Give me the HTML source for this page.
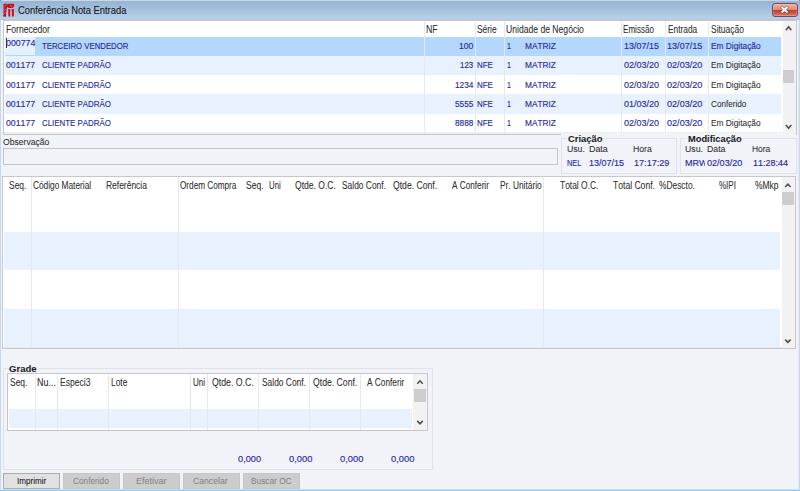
<!DOCTYPE html>
<html><head><meta charset="utf-8"><title>Conferência Nota Entrada</title>
<style>
html,body{margin:0;padding:0;}
body{width:800px;height:491px;overflow:hidden;position:relative;background:#f1f3f9;font-family:"Liberation Sans",sans-serif;font-size:9.7px;color:#2c2c2c;font-kerning:none;}
.a{position:absolute;}
.t{position:absolute;white-space:nowrap;line-height:12px;height:12px;transform-origin:0 0;-webkit-text-stroke:0.06px currentColor;}
.b{color:#2a2aa2;-webkit-text-stroke:0.15px currentColor;}
#title{left:0;top:0;width:800px;height:18px;background:linear-gradient(#96b3d1 0,#a8c2df 55%,#b7d2ec 100%);border-top:1px solid #c9d8e8;border-bottom:1px solid #bcc5cf;}
.grid{background:#fff;border:1px solid #c4c8cd;box-sizing:border-box;overflow:hidden;}
.row{position:absolute;left:1px;}
.alt{background:#e7f2fe;}
.vl{position:absolute;top:0;bottom:0;width:1px;background:#e6e8ea;}
.sb{position:absolute;background:#f2f2f2;top:0;bottom:0;}
.th{position:absolute;background:#cdcdcd;}
.btn{position:absolute;top:473px;height:16px;width:56.5px;box-sizing:border-box;border:1px solid #c6c6c6;background:#cccccc;}
.gb{position:absolute;border:1px solid #dfe2e7;box-sizing:border-box;}
.gl{position:absolute;background:#f1f3f9;height:3px;}
</style></head><body>
<!-- window frame -->
<div class="a" id="title"></div>
<div class="a" style="left:0;top:20px;width:1px;height:471px;background:#c5d9ee"></div>
<div class="a" style="left:799px;top:20px;width:1px;height:471px;background:#c5d9ee"></div>
<div class="a" style="left:798px;top:20px;width:1px;height:471px;background:#e2ebf6"></div>
<div class="a" style="left:0;top:489px;width:800px;height:1px;background:#c4e4f1"></div>
<div class="a" style="left:0;top:490px;width:800px;height:1px;background:#88cfe6"></div>
<div class="a" style="left:0;top:0;width:1px;height:1px;background:#7d858e"></div>
<div class="a" style="left:799px;top:0;width:1px;height:1px;background:#6f9096"></div>
<!-- icon -->
<svg class="a" style="left:2px;top:2px" width="14" height="16" viewBox="2 2 14 16"><path d="M3.4 4.3 Q3.4 3.7 4 3.7 L6.9 3.7 L7.4 4.6 L8 3.7 L13.5 3.7 Q14.1 3.7 14.1 4.3 L14.1 6.6 Q13.4 7.9 11.6 7.9 L9 7.9 Q7.6 7.6 7.1 6.7 Q6.9 8 6.6 9.4 Q6.1 12.6 6 16.5 L3.4 16.5 Q3.2 12 3.6 8.4 Z" fill="#c8121a"/><path d="M8 9.7 L9 9 L10.2 9 L10.2 16.5 L8.3 16.5 L8.3 10.5 L8 10.5 Z M11.4 9.7 L12.4 9 L13.9 9 L13.9 16.5 L11.9 16.5 L11.9 10.5 L11.4 10.5 Z" fill="#d01018"/><path d="M4.3 6.5 L6.6 4.6 M9.9 4.9 L12 6.8 M3.9 10.9 L6 8.9 M3.8 14.2 L5.8 11.9" stroke="#e9a0a6" stroke-width="0.55" fill="none"/><path d="M3.4 16.5 L6 16.5 L6.05 14 L3.4 15 Z" fill="#a80c12" opacity=".6"/></svg>
<!-- close button -->
<div class="a" style="left:772px;top:3px;width:26px;height:14px;border:1px solid #734860;border-radius:3px;box-sizing:border-box;background:linear-gradient(#eeb4a8 0,#e08a78 46%,#c0402a 54%,#c94e36 70%,#dc8068 100%);box-shadow:inset 0 0 0 0.5px rgba(255,220,210,.5)"></div>
<svg class="a" style="left:776px;top:3px" width="18" height="14" viewBox="776 3 18 14"><path d="M781 6.6 L788 12.9 M788 6.6 L781 12.9" stroke="rgba(95,55,65,0.6)" stroke-width="3.2"/><path d="M781.5 7.05 L787.5 12.45 M787.5 7.05 L781.5 12.45" stroke="#fff" stroke-width="1.9"/></svg>

<div class="t " style="left:18.25px;top:5.00px;transform:scaleX(0.9019);font-size:10.4px;color:#16161e;-webkit-text-stroke:0.1px #16161e;">Conferência Nota Entrada</div>
<!-- GRID 1 -->
<div class="a grid" style="left:3px;top:20px;width:794px;height:115px;">
 <div class="row" style="top:15.8px;height:19.2px;width:776px;background:#b4d8fd"></div>
 <div class="row alt" style="top:35.0px;height:19.2px;width:776px;"></div>
 <div class="row alt" style="top:73.4px;height:19.2px;width:776px;"></div>
 <div class="a" style="left:1px;top:15.8px;width:30px;height:18.5px;background:#e4f0fd"></div>
 <div class="vl" style="left:420px"></div>
 <div class="vl" style="left:471px"></div>
 <div class="vl" style="left:500px"></div>
 <div class="vl" style="left:617px"></div>
 <div class="vl" style="left:661px"></div>
 <div class="vl" style="left:704px"></div>
 <div class="a" style="left:0;top:111.4px;width:800px;height:3px;background:#eeeeee"></div>
 <div class="sb" style="left:778.5px;width:14px;"></div>
 <div class="th" style="left:778.7px;top:49.1px;width:11.8px;height:13.4px;"></div>
</div>
<svg class="a" style="left:0;top:0" width="800" height="491" viewBox="0 0 800 491"><path d="M785.9 30.2 L788.6 26.8 L791.3000000000001 30.2" fill="none" stroke="#4c4c4c" stroke-width="1.55"/></svg>
<svg class="a" style="left:0;top:0" width="800" height="491" viewBox="0 0 800 491"><path d="M785.9 125.1 L788.6 128.2 L791.3000000000001 125.1" fill="none" stroke="#4c4c4c" stroke-width="1.55"/></svg>
<div class="t " style="left:5.75px;top:23.64px;transform:scaleX(0.8584);font-size:10.0px;">Fornecedor</div>
<div class="t " style="left:426.00px;top:23.64px;transform:scaleX(0.8741);font-size:10.0px;">NF</div>
<div class="t " style="left:477.00px;top:23.64px;transform:scaleX(0.8418);font-size:10.0px;">Série</div>
<div class="t " style="left:506.25px;top:23.64px;transform:scaleX(0.8596);font-size:10.0px;">Unidade de Negócio</div>
<div class="t " style="left:623.25px;top:23.64px;transform:scaleX(0.8059);font-size:10.0px;">Emissão</div>
<div class="t " style="left:667.50px;top:23.64px;transform:scaleX(0.8321);font-size:10.0px;">Entrada</div>
<div class="t " style="left:710.75px;top:23.64px;transform:scaleX(0.8453);font-size:10.0px;">Situação</div>
<div class="t b" style="left:5.50px;top:36.94px;transform:scaleX(0.9090);">000774</div>
<div class="t b" style="left:41.50px;top:40.14px;transform:scaleX(0.8022);">TERCEIRO VENDEDOR</div>
<div class="t b" style="left:459.00px;top:40.14px;transform:scaleX(0.8904);">100</div>
<div class="t b" style="left:507.00px;top:40.14px;transform:scaleX(0.7235);">1</div>
<div class="t b" style="left:524.50px;top:40.14px;transform:scaleX(0.8571);">MATRIZ</div>
<div class="t b" style="left:623.75px;top:40.14px;transform:scaleX(0.9253);">13/07/15</div>
<div class="t b" style="left:667.25px;top:40.14px;transform:scaleX(0.9385);">13/07/15</div>
<div class="t b" style="left:710.75px;top:40.14px;transform:scaleX(0.8616);">Em Digitação</div>
<div class="t b" style="left:5.50px;top:59.34px;transform:scaleX(0.9016);">001177</div>
<div class="t b" style="left:41.50px;top:59.34px;transform:scaleX(0.8149);">CLIENTE PADRÃO</div>
<div class="t b" style="left:460.25px;top:59.34px;transform:scaleX(0.8131);">123</div>
<div class="t b" style="left:476.50px;top:59.34px;transform:scaleX(0.8200);">NFE</div>
<div class="t b" style="left:507.00px;top:59.34px;transform:scaleX(0.7235);">1</div>
<div class="t b" style="left:524.50px;top:59.34px;transform:scaleX(0.8571);">MATRIZ</div>
<div class="t b" style="left:623.75px;top:59.34px;transform:scaleX(0.9253);">02/03/20</div>
<div class="t b" style="left:667.25px;top:59.34px;transform:scaleX(0.9385);">02/03/20</div>
<div class="t " style="left:710.75px;top:59.34px;transform:scaleX(0.8616);">Em Digitação</div>
<div class="t b" style="left:5.50px;top:78.54px;transform:scaleX(0.9016);">001177</div>
<div class="t b" style="left:41.50px;top:78.54px;transform:scaleX(0.8149);">CLIENTE PADRÃO</div>
<div class="t b" style="left:455.00px;top:78.54px;transform:scaleX(0.8533);">1234</div>
<div class="t b" style="left:476.50px;top:78.54px;transform:scaleX(0.8200);">NFE</div>
<div class="t b" style="left:507.00px;top:78.54px;transform:scaleX(0.7235);">1</div>
<div class="t b" style="left:524.50px;top:78.54px;transform:scaleX(0.8571);">MATRIZ</div>
<div class="t b" style="left:623.75px;top:78.54px;transform:scaleX(0.9253);">02/03/20</div>
<div class="t b" style="left:667.25px;top:78.54px;transform:scaleX(0.9385);">02/03/20</div>
<div class="t " style="left:710.75px;top:78.54px;transform:scaleX(0.8616);">Em Digitação</div>
<div class="t b" style="left:5.50px;top:97.74px;transform:scaleX(0.9016);">001177</div>
<div class="t b" style="left:41.50px;top:97.74px;transform:scaleX(0.8149);">CLIENTE PADRÃO</div>
<div class="t b" style="left:455.00px;top:97.74px;transform:scaleX(0.8533);">5555</div>
<div class="t b" style="left:476.50px;top:97.74px;transform:scaleX(0.8200);">NFE</div>
<div class="t b" style="left:507.00px;top:97.74px;transform:scaleX(0.7235);">1</div>
<div class="t b" style="left:524.50px;top:97.74px;transform:scaleX(0.8571);">MATRIZ</div>
<div class="t b" style="left:623.75px;top:97.74px;transform:scaleX(0.9253);">01/03/20</div>
<div class="t b" style="left:667.25px;top:97.74px;transform:scaleX(0.9385);">02/03/20</div>
<div class="t " style="left:710.75px;top:97.74px;transform:scaleX(0.8425);">Conferido</div>
<div class="t b" style="left:5.50px;top:116.94px;transform:scaleX(0.9016);">001177</div>
<div class="t b" style="left:41.50px;top:116.94px;transform:scaleX(0.8149);">CLIENTE PADRÃO</div>
<div class="t b" style="left:455.00px;top:116.94px;transform:scaleX(0.8533);">8888</div>
<div class="t b" style="left:476.50px;top:116.94px;transform:scaleX(0.8200);">NFE</div>
<div class="t b" style="left:507.00px;top:116.94px;transform:scaleX(0.7235);">1</div>
<div class="t b" style="left:524.50px;top:116.94px;transform:scaleX(0.8571);">MATRIZ</div>
<div class="t b" style="left:623.75px;top:116.94px;transform:scaleX(0.9253);">02/03/20</div>
<div class="t b" style="left:667.25px;top:116.94px;transform:scaleX(0.9385);">02/03/20</div>
<div class="t " style="left:710.75px;top:116.94px;transform:scaleX(0.8616);">Em Digitação</div>
<div class="a" style="left:6px;top:38px;width:1px;height:10px;background:#333"></div>
<div class="t " style="left:2.50px;top:135.84px;transform:scaleX(0.8883);">Observação</div>
<div class="a" style="left:3px;top:148px;width:554.5px;height:17px;border:1px solid #c2c6cc;box-sizing:border-box;background:#f1f3f9"></div>
<div class="a" style="left:561px;top:133px;width:235px;height:3px;background:#f1f3f9"></div>
<div class="gb" style="left:561px;top:138px;width:116px;height:36px;"></div>
<div class="gb" style="left:680px;top:138px;width:116.5px;height:36px;"></div>
<div class="gl" style="left:567px;top:137px;width:36px;"></div>
<div class="gl" style="left:687px;top:137px;width:55px;"></div>
<div class="t " style="left:567.90px;top:132.64px;transform:scaleX(0.9705);font-weight:bold;color:#1c1c1c;">Criação</div>
<div class="t " style="left:687.70px;top:132.64px;transform:scaleX(0.9592);font-weight:bold;color:#1c1c1c;">Modificação</div>
<div class="t " style="left:567.00px;top:142.54px;transform:scaleX(0.8935);">Usu.</div>
<div class="t " style="left:588.50px;top:142.54px;transform:scaleX(0.9185);">Data</div>
<div class="t " style="left:633.20px;top:142.54px;transform:scaleX(0.8952);">Hora</div>
<div class="t " style="left:684.90px;top:142.54px;transform:scaleX(0.9035);">Usu.</div>
<div class="t " style="left:706.90px;top:142.54px;transform:scaleX(0.9038);">Data</div>
<div class="t " style="left:751.50px;top:142.54px;transform:scaleX(0.8714);">Hora</div>
<div class="t b" style="left:567.00px;top:156.84px;transform:scaleX(0.7582);">NEL</div>
<div class="t b" style="left:589.30px;top:156.84px;transform:scaleX(0.9306);">13/07/15</div>
<div class="t b" style="left:634.00px;top:156.84px;transform:scaleX(0.9385);">17:17:29</div>
<div class="a" style="left:684px;top:155px;width:20.6px;height:14px;overflow:hidden">
<div class="t b" style="left:0.90px;top:1.84px;transform:scaleX(0.9297);">MRW</div>
</div>
<div class="t b" style="left:706.90px;top:156.84px;transform:scaleX(0.9359);">02/03/20</div>
<div class="t b" style="left:752.70px;top:156.84px;transform:scaleX(0.9282);">11:28:44</div>
<!-- GRID 2 -->
<div class="a grid" style="left:2px;top:176px;width:794px;height:173px;">
 <div class="row alt" style="top:54.8px;height:38.6px;width:776px;"></div>
 <div class="row alt" style="top:132.0px;height:38.5px;width:776px;"></div>
 <div class="vl" style="left:28px"></div>
 <div class="vl" style="left:175px"></div>
 <div class="vl" style="left:540px"></div>
 <div class="a" style="left:0;top:170px;width:800px;height:1px;background:#eaeaea"></div>
 <div class="sb" style="left:779px;width:14px;"></div>
 <div class="th" style="left:779.2px;top:14.8px;width:11.6px;height:13px;"></div>
</div>
<svg class="a" style="left:0;top:0" width="800" height="491" viewBox="0 0 800 491"><path d="M785.1999999999999 187.0 L787.9 184.10000000000002 L790.6 187.0" fill="none" stroke="#4c4c4c" stroke-width="1.55"/></svg>
<svg class="a" style="left:0;top:0" width="800" height="491" viewBox="0 0 800 491"><path d="M785.1999999999999 339.6 L787.9 342.4 L790.6 339.6" fill="none" stroke="#4c4c4c" stroke-width="1.55"/></svg>
<div class="t " style="left:8.50px;top:179.53px;transform:scaleX(0.8456);font-size:10.0px;">Seq.</div>
<div class="t " style="left:32.60px;top:179.53px;transform:scaleX(0.8296);font-size:10.0px;">Código Material</div>
<div class="t " style="left:106.00px;top:179.53px;transform:scaleX(0.8458);font-size:10.0px;">Referência</div>
<div class="t " style="left:179.50px;top:179.53px;transform:scaleX(0.8185);font-size:10.0px;">Ordem Compra</div>
<div class="t " style="left:245.75px;top:179.53px;transform:scaleX(0.8577);font-size:10.0px;">Seq.</div>
<div class="t " style="left:269.00px;top:179.53px;transform:scaleX(0.7800);font-size:10.0px;">Uni</div>
<div class="t " style="left:294.50px;top:179.53px;transform:scaleX(0.8554);font-size:10.0px;">Qtde. O.C.</div>
<div class="t " style="left:342.00px;top:179.53px;transform:scaleX(0.8399);font-size:10.0px;">Saldo Conf.</div>
<div class="t " style="left:392.50px;top:179.53px;transform:scaleX(0.8630);font-size:10.0px;">Qtde. Conf.</div>
<div class="t " style="left:451.50px;top:179.53px;transform:scaleX(0.8199);font-size:10.0px;">A Conferir</div>
<div class="t " style="left:499.50px;top:179.53px;transform:scaleX(0.8329);font-size:10.0px;">Pr. Unitário</div>
<div class="t " style="left:559.50px;top:179.53px;transform:scaleX(0.8428);font-size:10.0px;">Total O.C.</div>
<div class="t " style="left:612.80px;top:179.53px;transform:scaleX(0.8568);font-size:10.0px;">Total Conf.</div>
<div class="t " style="left:658.50px;top:179.53px;transform:scaleX(0.8388);font-size:10.0px;">%Descto.</div>
<div class="t " style="left:718.50px;top:179.53px;transform:scaleX(0.8000);font-size:10.0px;">%IPI</div>
<div class="t " style="left:754.50px;top:179.53px;transform:scaleX(0.8459);font-size:10.0px;">%Mkp</div>
<!-- Grade -->
<div class="gb" style="left:3px;top:368px;width:430px;height:102px;"></div>
<div class="gl" style="left:8.5px;top:367px;width:29px;"></div>
<div class="t " style="left:9.00px;top:363.14px;transform:scaleX(0.9875);font-weight:bold;color:#1c1c1c;">Grade</div>
<div class="a grid" style="left:7px;top:373px;width:420.5px;height:58px;">
 <div class="row alt" style="top:35.0px;height:19px;width:403px;"></div>
 <div class="vl" style="left:27px"></div>
 <div class="vl" style="left:49px"></div>
 <div class="vl" style="left:100px"></div>
 <div class="vl" style="left:182px"></div>
 <div class="vl" style="left:199px"></div>
 <div class="vl" style="left:250px"></div>
 <div class="vl" style="left:301px"></div>
 <div class="vl" style="left:352px"></div>
 <div class="sb" style="left:405px;width:13.5px;"></div>
 <div class="th" style="left:406.0px;top:15.0px;width:11.5px;height:12.5px;"></div>
</div>
<svg class="a" style="left:0;top:0" width="800" height="491" viewBox="0 0 800 491"><path d="M417.3 383.7 L420 380.8 L422.7 383.7" fill="none" stroke="#4c4c4c" stroke-width="1.55"/></svg>
<svg class="a" style="left:0;top:0" width="800" height="491" viewBox="0 0 800 491"><path d="M417.3 420.90000000000003 L420 423.8 L422.7 420.90000000000003" fill="none" stroke="#4c4c4c" stroke-width="1.55"/></svg>
<div class="t " style="left:10.00px;top:377.14px;transform:scaleX(0.8456);font-size:10.0px;">Seq.</div>
<div class="t " style="left:37.00px;top:377.14px;transform:scaleX(0.8947);font-size:10.0px;">Nu...</div>
<div class="t " style="left:59.50px;top:377.14px;transform:scaleX(0.8545);font-size:10.0px;">Especi3</div>
<div class="t " style="left:110.75px;top:377.14px;transform:scaleX(0.8424);font-size:10.0px;">Lote</div>
<div class="t " style="left:193.10px;top:377.14px;transform:scaleX(0.8067);font-size:10.0px;">Uni</div>
<div class="t " style="left:212.10px;top:377.14px;transform:scaleX(0.8763);font-size:10.0px;">Qtde. O.C.</div>
<div class="t " style="left:262.10px;top:377.14px;transform:scaleX(0.8399);font-size:10.0px;">Saldo Conf.</div>
<div class="t " style="left:313.10px;top:377.14px;transform:scaleX(0.8660);font-size:10.0px;">Qtde. Conf.</div>
<div class="t " style="left:367.30px;top:377.14px;transform:scaleX(0.8288);font-size:10.0px;">A Conferir</div>
<div class="t b" style="left:237.90px;top:452.84px;transform:scaleX(0.9526);">0,000</div>
<div class="t b" style="left:288.90px;top:452.84px;transform:scaleX(0.9649);">0,000</div>
<div class="t b" style="left:339.90px;top:452.84px;transform:scaleX(0.9649);">0,000</div>
<div class="t b" style="left:390.90px;top:452.84px;transform:scaleX(0.9649);">0,000</div>
<!-- Buttons -->
<div class="btn" style="left:3px;background:#e1e1e1;border-color:#adadad"></div>
<div class="btn" style="left:63px;"></div>
<div class="btn" style="left:123px;"></div>
<div class="btn" style="left:183px;"></div>
<div class="btn" style="left:243px;"></div>
<div class="t " style="left:16.90px;top:474.84px;transform:scaleX(0.8354);color:#111;">Imprimir</div>
<div class="t " style="left:73.10px;top:474.84px;transform:scaleX(0.8521);color:#858585;">Conferido</div>
<div class="t " style="left:135.90px;top:474.84px;transform:scaleX(0.9256);color:#858585;">Efetivar</div>
<div class="t " style="left:193.30px;top:474.84px;transform:scaleX(0.8922);color:#858585;">Cancelar</div>
<div class="t " style="left:250.50px;top:474.84px;transform:scaleX(0.8570);color:#858585;">Buscar OC</div>
</body></html>
